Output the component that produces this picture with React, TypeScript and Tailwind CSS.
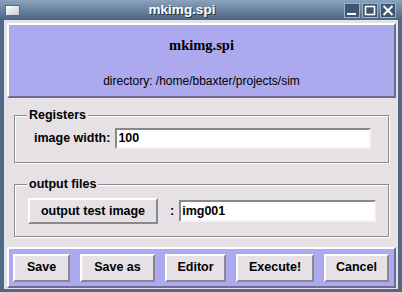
import React from "react";

const lav = "bg-[#aca9ee]";

function WinButton({ kind }: { kind: "min" | "max" | "close" }) {
    return (
        <div className="w-[16px] h-[15px] border border-[#9fb2c6] bg-[#3e5672] flex items-center justify-center">
            <svg width="12" height="11" viewBox="0 0 12 11">
                {kind === "min" && <rect x="1" y="8" width="9" height="2" fill="#fff" />}
                {kind === "max" && <rect x="1.5" y="1.5" width="9" height="8" fill="none" stroke="#fff" strokeWidth="1.6" />}
                {kind === "close" && (
                    <path d="M1.5 1 L10.5 10 M10.5 1 L1.5 10" stroke="#fff" strokeWidth="2" />
                )}
            </svg>
        </div>
    );
}

function Group({ title, children }: { title: string; children: React.ReactNode }) {
    return (
        <div className="relative border border-[#8c8a8c] shadow-[inset_1px_1px_0_#fff,1px_1px_0_#fff]">
            <span className="absolute -top-[9px] left-[12px] px-[2px] bg-[#e5e1e5] text-[12.5px] font-bold leading-[16px]">
                {title}
            </span>
            {children}
        </div>
    );
}

function Btn({ label, w, h = "h-[28px]" }: { label: string; w: string; h?: string }) {
    return (
        <button
            className={`${w} ${h} bg-[#e5e1e5] border-2 border-t-white border-l-white border-b-[#8a888a] border-r-[#8a888a] text-[12.5px] font-bold text-black`}
        >
            {label}
        </button>
    );
}

function Entry({ value, w, h }: { value: string; w: string; h: string }) {
    return (
        <div
            className={`${w} ${h} bg-white border-2 border-t-[#8a888a] border-l-[#8a888a] border-b-[#f4f2f4] border-r-[#f4f2f4] flex items-center pl-[1px] text-[12.5px] font-bold`}
        >
            {value}
        </div>
    );
}

export default function App() {
    return (
        <div className="w-[402px] h-[292px] bg-[#4f6985] flex flex-col font-['Liberation_Sans',Arial,sans-serif] text-black overflow-hidden">
            {/* title bar */}
            <div className="h-[20px] flex items-center px-[5px] bg-gradient-to-b from-[#8ba3bc] to-[#4b6682]">
                <div className="w-[15px] h-[11px] border border-[#5c6c7c] bg-gradient-to-br from-white to-[#c8ccd4]" />
                <div className="flex-1 text-center text-white font-bold text-[13.5px] leading-[20px] [text-shadow:1px_1px_0_#203040]">
                    mkimg.spi
                </div>
                <div className="flex gap-[2px] mr-[1px]">
                    <WinButton kind="min" />
                    <WinButton kind="max" />
                    <WinButton kind="close" />
                </div>
            </div>

            {/* client area */}
            <div className="mx-[4px] mb-[4px] flex-1 flex flex-col bg-[#e5e1e5] px-[2px] pt-[2px] pb-[1px] border-l border-t border-[#dfe6ee]">
                {/* header */}
                <div className={`h-[75px] ${lav} border-2 border-t-white border-l-white border-b-[#6d6a94] border-r-[#6d6a94] flex flex-col items-center`}>
                    <div className="mt-[11px] font-['Liberation_Serif',serif] font-bold text-[14.5px] leading-[18px]">
                        mkimg.spi
                    </div>
                    <div className="mt-[20px] text-[12px] leading-[14px]">directory: /home/bbaxter/projects/sim</div>
                </div>

                {/* body */}
                <div className="flex flex-col gap-[21px] px-[7px] pt-[17px] pb-[10px]">
                    <Group title="Registers">
                        <div className="flex items-center pl-[19px] pr-[17px] pt-[12px] pb-[13px]">
                            <span className="text-[12.5px] font-bold mr-[5px]">image width:</span>
                            <Entry value="100" w="flex-1" h="h-[21px]" />
                        </div>
                    </Group>
                    <Group title="output files">
                        <div className="flex items-center pl-[13px] pr-[12px] pt-[13px] pb-[12px]">
                            <Btn label="output test image" w="w-[130px]" h="h-[26px]" />
                            <span className="ml-[12px] mr-[5px] text-[12.5px] font-bold">:</span>
                            <Entry value="img001" w="flex-1" h="h-[22px]" />
                        </div>
                    </Group>
                </div>

                {/* button bar */}
                <div className={`h-[41px] ${lav} border-2 border-t-white border-l-white border-b-[#6d6a94] border-r-[#6d6a94] flex items-center justify-between pl-[4px] pr-[5px]`}>
                    <Btn label="Save" w="w-[57px]" />
                    <Btn label="Save as" w="w-[75px]" />
                    <Btn label="Editor" w="w-[61px]" />
                    <Btn label="Execute!" w="w-[78px]" />
                    <Btn label="Cancel" w="w-[65px]" />
                </div>
            </div>
        </div>
    );
}
